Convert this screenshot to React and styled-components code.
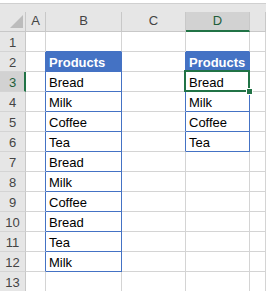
import React from 'react'
import styled, { createGlobalStyle } from 'styled-components'

const Global = createGlobalStyle`
  html, body {
    margin: 0;
    padding: 0;
    background: #ffffff;
    overflow: hidden;
  }
  body {
    font-family: "Liberation Sans", Arial, sans-serif;
  }
`

const GREEN = '#217346'
const BLUE = '#4472c4'
const GRID = '#d4d4d4'
const HEAD_LINE = '#c8c8c8'

const Sheet = styled.div`
  width: 266px;
  height: 291px;
  overflow: hidden;
  display: flex;
  flex-direction: column;
`

const TopBand = styled.div`
  height: 12px;
  flex: none;
  box-sizing: border-box;
  border-top: 3px solid #ffffff;
  background: #e6e6e6;
  box-shadow: inset 0 1px 0 #d0d0d0;
`

const Row = styled.div`
  display: grid;
  grid-template-columns: 26px 20px 76px 64px 64px 1fr;
  grid-template-rows: 20px;
  height: 20px;
  flex: none;
`

const Corner = styled.div`
  box-sizing: border-box;
  background: #e6e6e6;
  border-right: 1px solid ${HEAD_LINE};
  border-bottom: 1px solid ${HEAD_LINE};
  display: flex;
  align-items: flex-end;
  justify-content: flex-end;
  padding: 0 2px 3px 0;
`

const ColHead = styled.div`
  box-sizing: border-box;
  background: ${p => (p.$active ? '#d2d2d2' : '#e6e6e6')};
  border-right: 1px solid ${HEAD_LINE};
  border-bottom: ${p => (p.$active ? `2px solid ${GREEN}` : `1px solid ${HEAD_LINE}`)};
  color: ${p => (p.$active ? '#1f5e3a' : '#444444')};
  font-size: 13px;
  line-height: 18px;
  text-align: center;
`

const RowHead = styled.div`
  box-sizing: border-box;
  background: ${p => (p.$active ? '#d2d2d2' : '#e6e6e6')};
  border-right: ${p => (p.$active ? `2px solid ${GREEN}` : `1px solid ${HEAD_LINE}`)};
  border-bottom: 1px solid ${GRID};
  color: ${p => (p.$active ? '#1f5e3a' : '#444444')};
  font-size: 13px;
  line-height: 17px;
  padding-top: 2px;
  text-align: center;
  padding-left: ${p => (p.$active ? '1px' : '0')};
`

const Cell = styled.div`
  position: relative;
  box-sizing: border-box;
  min-width: 0;
  background: ${p => (p.$head ? BLUE : '#ffffff')};
  border-right: 1px solid ${p => (p.$right ? BLUE : GRID)};
  border-bottom: 1px solid ${p => (p.$bottom ? BLUE : GRID)};
  margin-left: ${p => (p.$head ? '-1px' : '0')};
  color: ${p => (p.$head ? '#ffffff' : '#000000')};
  font-size: 13px;
  font-weight: ${p => (p.$head ? 700 : 400)};
  line-height: 17px;
  padding: 2px 0 0 ${p => (p.$head ? '4px' : '3px')};
  white-space: nowrap;
`

const Selection = styled.div`
  position: absolute;
  z-index: 2;
  left: -2px;
  top: -2px;
  right: -1px;
  bottom: -1px;
  border: 2px solid ${GREEN};
  pointer-events: none;
`

const Handle = styled.div`
  position: absolute;
  right: -4px;
  bottom: -4px;
  width: 5px;
  height: 5px;
  background: ${GREEN};
  box-shadow: 0 0 0 1px #ffffff;
`

const colB = [null, 'Products', 'Bread', 'Milk', 'Coffee', 'Tea', 'Bread', 'Milk', 'Coffee', 'Bread', 'Tea', 'Milk', null]
const colD = [null, 'Products', 'Bread', 'Milk', 'Coffee', 'Tea', null, null, null, null, null, null, null]

function CornerMark() {
  return (
    <svg width="13" height="13" viewBox="0 0 13 13">
      <polygon points="13,0 13,13 0,13" fill="#bcbcbc" />
    </svg>
  )
}

export default function App() {
  return (
    <Sheet>
      <Global />
      <TopBand />
      <Row>
        <Corner>
          <CornerMark />
        </Corner>
        <ColHead>A</ColHead>
        <ColHead>B</ColHead>
        <ColHead>C</ColHead>
        <ColHead $active>D</ColHead>
        <ColHead />
      </Row>
      {colB.map((b, i) => {
        const n = i + 1
        const d = colD[i]
        const inB = b !== null
        const inD = d !== null
        const nextB = i + 1 < colB.length && colB[i + 1] !== null
        const nextD = i + 1 < colD.length && colD[i + 1] !== null
        return (
          <Row key={n}>
            <RowHead $active={n === 3}>{n}</RowHead>
            <Cell $right={inB} />
            <Cell $head={n === 2} $right={inB} $bottom={inB || nextB}>
              {b}
            </Cell>
            <Cell $right={inD} />
            <Cell $head={n === 2} $right={inD} $bottom={inD || nextD}>
              {d}
              {n === 3 && (
                <Selection>
                  <Handle />
                </Selection>
              )}
            </Cell>
            <Cell />
          </Row>
        )
      })}
    </Sheet>
  )
}
